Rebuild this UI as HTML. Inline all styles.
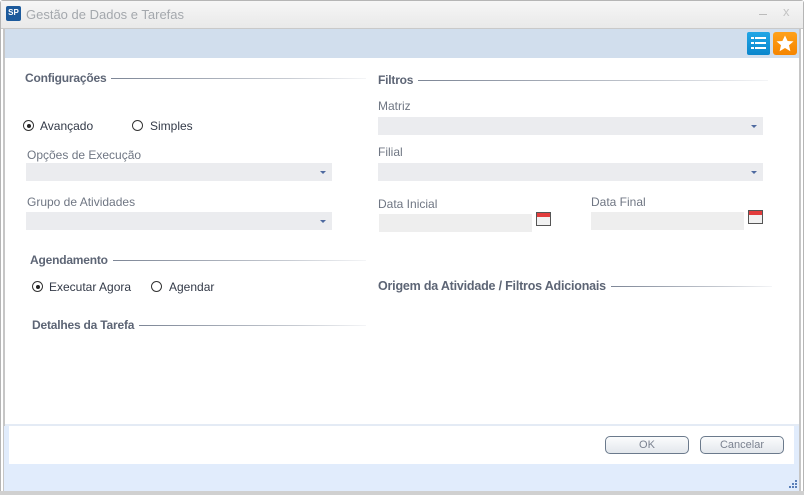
<!DOCTYPE html>
<html><head><meta charset="utf-8">
<style>
*{margin:0;padding:0;box-sizing:border-box}
body{width:804px;height:495px;background:#fff;font-family:"Liberation Sans",sans-serif;position:relative;overflow:hidden}
.a{position:absolute}
.lbl{position:absolute;font-size:12px;color:#6f7683;white-space:nowrap}
.hd{position:absolute;display:flex;align-items:center;font-size:12px;font-weight:bold;color:#5d6575;white-space:nowrap;letter-spacing:-0.2px}
.hd i{flex:1;height:1px;margin-left:5px;margin-top:1px;background:linear-gradient(to right,#7d8696,#c8ccd3 70%,#f4f5f7)}
.fld{position:absolute;background:#ebecef;height:18px}
.dd::after{content:"";position:absolute;right:6px;top:8px;border-left:3px solid transparent;border-right:3px solid transparent;border-top:3px solid #4f6aa0}
.rad{position:absolute;width:11px;height:11px;border:1px solid #333;border-radius:50%}
.rad.on::after{content:"";position:absolute;left:2.5px;top:2.5px;width:4px;height:4px;border-radius:50%;background:#222}
.rt{position:absolute;font-size:12px;color:#333a48;white-space:nowrap}
.btn{position:absolute;height:18px;border:1px solid #6b7a8c;border-radius:5px;background:linear-gradient(#fbfcfd,#e3e7ec);font-size:11px;color:#7b8290;text-align:center;line-height:16px}
.cal{position:absolute;width:15px;height:14px;border:1px solid #555;background:#f1f1f1}
.cal::before{content:"";position:absolute;left:0;top:0;right:0;height:4px;background:#e23c3c}
</style></head><body>
<div class="a" style="left:0;top:0;width:804px;height:495px;border:1px solid #b5b5b5;border-radius:3px 3px 0 0"></div>
<div class="a" style="left:1px;top:1px;width:802px;height:28px;background:linear-gradient(#f6f6f6,#e9e9e9);border-bottom:1px solid #c9c9c9"></div>
<div class="a" style="left:6px;top:6px;width:15px;height:15px;background:#1c5a9c;border-radius:2px;color:#fff;font-size:8px;font-weight:bold;line-height:13px;text-align:center">SP</div>
<div class="a" style="left:26px;top:7px;font-size:13px;color:#a4a8ad">Gestão de Dados e Tarefas</div>
<div class="a" style="left:759px;top:14px;width:8px;height:1px;background:#bbb"></div>
<div class="a" style="left:783px;top:4px;font-size:13px;color:#c4c4c4">x</div>
<div class="a" style="left:3px;top:29px;width:2px;height:462px;background:#c6c6c6"></div>
<div class="a" style="left:799px;top:29px;width:2px;height:462px;background:#c6c6c6"></div>
<div class="a" style="left:5px;top:29px;width:794px;height:29px;background:#d1deed"></div>
<div class="a" style="left:747px;top:32px;width:23px;height:23px;background:linear-gradient(#22a6e6,#0a86cc);border-radius:2px"></div>
<svg class="a" style="left:747px;top:32px" width="23" height="23"><g fill="#fff"><rect x="4" y="5" width="3" height="2"/><rect x="8" y="5" width="11" height="2"/><rect x="4" y="10" width="3" height="2"/><rect x="8" y="10" width="11" height="2"/><rect x="4" y="15" width="3" height="2"/><rect x="8" y="15" width="11" height="2"/></g></svg>
<div class="a" style="left:773px;top:32px;width:24px;height:23px;background:linear-gradient(#ffa11a,#f58500);border-radius:3px"></div>
<svg class="a" style="left:773px;top:32px" width="24" height="23"><polygon fill="#fff" points="12,3.5 14.6,9 20.5,9.4 16,13.3 17.4,19.2 12,16 6.6,19.2 8,13.3 3.5,9.4 9.4,9"/></svg>

<div class="hd" style="left:25px;top:71px;width:341px">Configurações<i></i></div>
<div class="hd" style="left:378px;top:73px;width:390px">Filtros<i></i></div>

<div class="rad on" style="left:23px;top:120px"></div><div class="rt" style="left:40px;top:119px">Avançado</div>
<div class="rad" style="left:132px;top:120px"></div><div class="rt" style="left:150px;top:119px">Simples</div>

<div class="lbl" style="left:27px;top:148px">Opções de Execução</div>
<div class="fld dd" style="left:26px;top:163px;width:306px"></div>
<div class="lbl" style="left:27px;top:195px">Grupo de Atividades</div>
<div class="fld dd" style="left:26px;top:212px;width:306px"></div>

<div class="hd" style="left:30px;top:253px;width:336px">Agendamento<i></i></div>
<div class="rad on" style="left:32px;top:281px"></div><div class="rt" style="left:49px;top:280px">Executar Agora</div>
<div class="rad" style="left:151px;top:281px"></div><div class="rt" style="left:169px;top:280px">Agendar</div>

<div class="hd" style="left:32px;top:318px;width:334px">Detalhes da Tarefa<i></i></div>

<div class="lbl" style="left:378px;top:99px">Matriz</div>
<div class="fld dd" style="left:378px;top:117px;width:385px"></div>
<div class="lbl" style="left:378px;top:145px">Filial</div>
<div class="fld dd" style="left:378px;top:163px;width:385px"></div>

<div class="lbl" style="left:378px;top:197px">Data Inicial</div>
<div class="fld" style="left:379px;top:214px;width:153px;background:#eeeeee"></div>
<div class="cal" style="left:536px;top:212px"></div>
<div class="lbl" style="left:591px;top:195px">Data Final</div>
<div class="fld" style="left:591px;top:212px;width:153px;background:#eeeeee"></div>
<div class="cal" style="left:748px;top:210px"></div>

<div class="hd" style="left:378px;top:279px;width:394px;font-size:12.5px">Origem da Atividade / Filtros Adicionais<i></i></div>

<div class="a" style="left:5px;top:424px;width:794px;height:2px;background:#e4ebf5"></div>
<div class="a" style="left:4px;top:426px;width:5px;height:38px;background:#e1ecfc"></div>
<div class="a" style="left:794px;top:426px;width:5px;height:38px;background:#e1ecfc"></div>
<div class="a" style="left:4px;top:464px;width:795px;height:27px;background:#e1ecfc"></div>
<div class="btn" style="left:605px;top:436px;width:84px">OK</div>
<div class="btn" style="left:700px;top:436px;width:84px">Cancelar</div>
<svg class="a" style="left:788px;top:479px" width="10" height="10"><g fill="#5a7fb8"><rect x="7" y="1" width="2" height="2"/><rect x="4" y="4" width="2" height="2"/><rect x="7" y="4" width="2" height="2"/><rect x="1" y="7" width="2" height="2"/><rect x="4" y="7" width="2" height="2"/><rect x="7" y="7" width="2" height="2"/></g></svg>
<div class="a" style="left:0;top:491px;width:804px;height:4px;background:#d0d0d0"></div>
</body></html>
